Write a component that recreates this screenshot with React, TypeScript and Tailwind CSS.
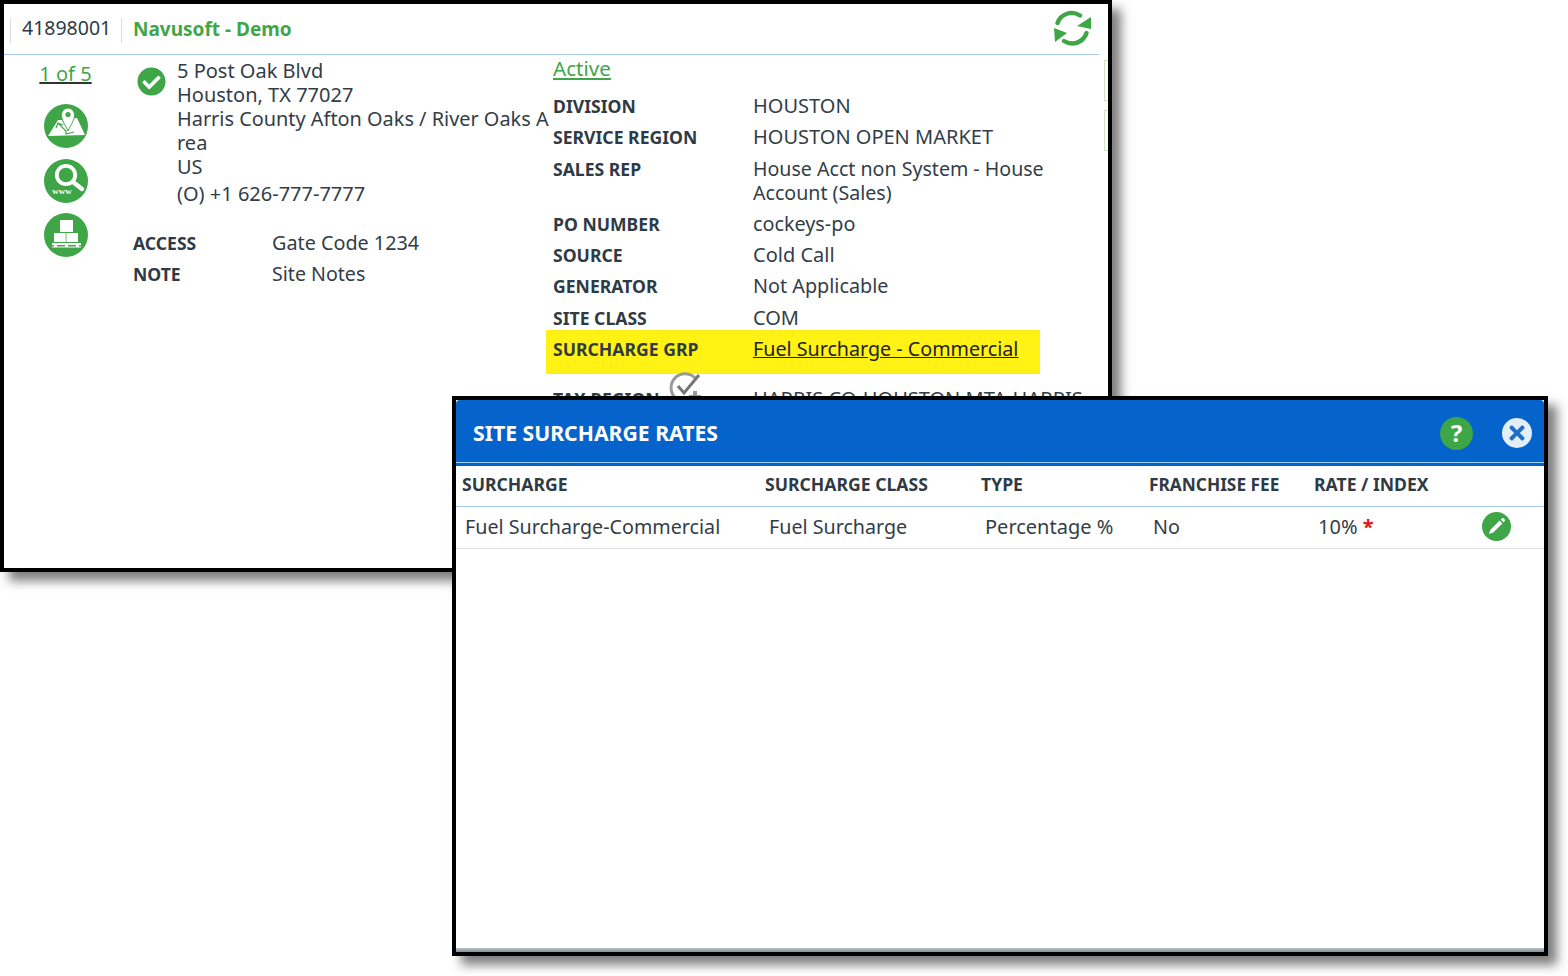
import React from "react";
import { FaCheckCircle, FaTimes } from "react-icons/fa";

const font = "font-['Noto_Sans','Open_Sans',sans-serif]";

function SyncIcon() {
  return (
    <svg viewBox="0 0 38 36" className="absolute left-[1049px] top-[6px] w-[38px] h-[36px]">
      <path d="M4.5 13 A15 15 0 0 1 27 5.5" fill="none" stroke="#3fa648" strokeWidth="4.4" strokeLinecap="round" />
      <path d="M38 7 L38 19 L24 16 Z" fill="#3fa648" />
      <path d="M33.5 23 A15 15 0 0 1 11 31" fill="none" stroke="#3fa648" strokeWidth="4.4" strokeLinecap="round" />
      <path d="M1 18 L14 23 L2 32 Z" fill="#3fa648" />
    </svg>
  );
}

function MapIcon() {
  return (
    <svg viewBox="0 0 44 44" className="w-[44px] h-[44px] block">
      <circle cx="22" cy="22" r="22" fill="#3fa648" />
      <path d="M14 16 L18 16 L24 26 L29 14 L33 14 L41 31 L4 32 Z" fill="#fff" />
      <path d="M12 24 L14 19 L22 27 L22 30 L30 28 M14 19 L19 21" stroke="#3fa648" strokeWidth="1.2" fill="none" />
      <path d="M24 27 C21 20 17.5 17 17.5 10.5 A6.5 6.5 0 0 1 30.5 10.5 C30.5 17 27 20 24 27 Z" fill="#fff" stroke="#3fa648" strokeWidth="1" />
      <circle cx="24" cy="10.5" r="2.6" fill="#3fa648" />
    </svg>
  );
}

function WebIcon() {
  return (
    <svg viewBox="0 0 44 44" className="w-[44px] h-[44px] block">
      <circle cx="22" cy="22" r="22" fill="#3fa648" />
      <circle cx="22" cy="16" r="9.2" fill="none" stroke="#fff" strokeWidth="3.8" />
      <path d="M29 23 L38 30" stroke="#fff" strokeWidth="4.4" strokeLinecap="round" />
      <text x="18" y="34.5" textAnchor="middle" fontSize="9" fontWeight="700" fill="#fff" fontFamily="Liberation Serif, serif">www</text>
    </svg>
  );
}

function PalletIcon() {
  return (
    <svg viewBox="0 0 44 44" className="w-[44px] h-[44px] block">
      <circle cx="22" cy="22" r="22" fill="#3fa648" />
      <path d="M16 7 H29 V19 H16 Z M10 20 H21.7 V29 H10 Z M22.4 20 H34 V29 H22.4 Z" fill="#fff" />
      <path d="M8 30 H37 V32 H8 Z M8 33.5 H37 V34.5 H8 Z M10 32 H13 V33.5 H10 Z M21 32 H24 V33.5 H21 Z M32 32 H35 V33.5 H32 Z" fill="#fff" />
    </svg>
  );
}

function CheckPlus() {
  return (
    <svg viewBox="0 0 36 36" className="w-[36px] h-[36px] block">
      <path d="M27 9 A14 14 0 1 0 28 25" fill="none" stroke="#9a9a9a" strokeWidth="3" />
      <path d="M9 16 L15 23 L30 5" fill="none" stroke="#777" strokeWidth="3" />
      <path d="M26 21 V33 M20 27 H32" stroke="#9a9a9a" strokeWidth="4" />
    </svg>
  );
}

function Pencil() {
  return (
    <svg viewBox="0 0 29 29" className="w-[29px] h-[29px] block">
      <circle cx="14.5" cy="14.5" r="14.5" fill="#3fa648" />
      <path d="M17.6 8.6 L20.4 11.4 L11.2 20.6 L7 22 L8.4 17.8 Z" fill="#fff" />
      <path d="M18.8 7.4 L19.8 6.4 A1.4 1.4 0 0 1 21.8 6.4 L22.6 7.2 A1.4 1.4 0 0 1 22.6 9.2 L21.6 10.2 Z" fill="#fff" />
    </svg>
  );
}

function Row({ label, children, className = "" }: { label: string; children: React.ReactNode; className?: string }) {
  return (
    <div className={`flex leading-[24px] ${className}`}>
      <div className="w-[200px] shrink-0 font-bold text-[17.6px] text-[#2f3a44]">{label}</div>
      <div className="flex-1">{children}</div>
    </div>
  );
}

function Panel() {
  return (
    <div className="w-[1112px] h-[572px] border-[4px] border-black bg-white shadow-[9px_9px_10px_rgba(0,0,0,0.5)] overflow-hidden relative">
      <div className="w-[1095px] h-[51px] border-b border-[#a9cbe8] flex items-center pl-[6px] pt-[3px] relative">
        <div className="h-[25px] flex items-center border-l border-[#ddd] pl-[11px] pr-[11px] pb-[6px] border-r text-[19.5px] text-[#2f3a44] w-[112px] whitespace-nowrap">41898001</div>
        <div className="pl-[11px] pb-[2px] font-bold text-[19px] text-[#3fa648] whitespace-nowrap">Navusoft - Demo</div>
        <SyncIcon />
      </div>

      <div className="absolute left-[1100px] top-[56px] w-[6px] h-[41px] border border-[#cfe3c4] bg-white" />
      <div className="absolute left-[1100px] top-[106px] w-[6px] h-[41px] border border-[#cfe3c4] bg-white" />

      <div className="flex text-[20px] text-[#333d47]">
        <div className="w-[124px] shrink-0 flex flex-col items-center pr-[1px]">
          <a className="mt-[5px] text-[#3fa648] underline decoration-[#333] leading-[27px]">1 of 5</a>
          <div className="mt-[17px] flex flex-col gap-[11px]">
            <MapIcon />
            <WebIcon />
            <div className="-mt-[1px]"><PalletIcon /></div>
          </div>
        </div>

        <div className="w-[425px] shrink-0 pt-[4px] pl-[5px]">
          <div className="flex pl-[4px]">
            <FaCheckCircle className="w-[29px] h-[29px] mt-[8px] text-[#3fa648] shrink-0" />
            <div className="pl-[11px] w-[381px] leading-[24px] break-all">
              <div>5 Post Oak Blvd</div>
              <div>Houston, TX 77027</div>
              <div className="whitespace-nowrap text-[19.9px]">Harris County Afton Oaks / River Oaks A</div>
              <div>rea</div>
              <div>US</div>
              <div className="mt-[3px]">(O) +1 626-777-7777</div>
            </div>
          </div>
          <div className="mt-[25px] flex leading-[24px]">
            <div className="w-[139px] font-bold text-[17.6px] text-[#2f3a44]">ACCESS</div>
            <div className="text-[19.8px]">Gate Code 1234</div>
          </div>
          <div className="mt-[7px] flex leading-[24px]">
            <div className="w-[139px] font-bold text-[17.6px] text-[#2f3a44]">NOTE</div>
            <div className="text-[19.6px]">Site Notes</div>
          </div>
        </div>

        <div className="w-[535px] shrink-0">
          <a className="block text-[#3fa648] text-[20.6px] underline leading-[27px]">Active</a>
          <div className="mt-[12px]"><Row label="DIVISION">HOUSTON</Row></div>
          <div className="mt-[7px]"><Row label="SERVICE REGION">HOUSTON OPEN MARKET</Row></div>
          <div className="mt-[8px]"><Row label="SALES REP"><div className="w-[310px] text-[19.6px]">House Acct non System - House Account (Sales)</div></Row></div>
          <div className="mt-[7px]"><Row label="PO NUMBER"><span className="text-[19.8px]">cockeys-po</span></Row></div>
          <div className="mt-[7px]"><Row label="SOURCE">Cold Call</Row></div>
          <div className="mt-[7px]"><Row label="GENERATOR"><span className="text-[19.8px]">Not Applicable</span></Row></div>
          <div className="mt-[8px]"><Row label="SITE CLASS">COM</Row></div>
          <div className="-ml-[7px] pl-[7px] w-[494px] h-[44px] pt-[7px] bg-[#fff214]">
            <Row label="SURCHARGE GRP"><span className="underline text-[#222] text-[19.7px]">Fuel Surcharge - Commercial</span></Row>
          </div>
          <div className="mt-[13px]"><Row label="TAX REGION">HARRIS CO-HOUSTON MTA-HARRIS</Row></div>
        </div>
      </div>

      <div className="absolute left-[665px] top-[366px]"><CheckPlus /></div>
    </div>
  );
}

const cols = "grid grid-cols-[303px_216px_168px_165px_1fr]";

function Modal() {
  return (
    <div className="absolute left-[452px] top-[396px] w-[1096px] h-[560px] border-[4px] border-black bg-white shadow-[9px_9px_10px_rgba(0,0,0,0.5)] flex flex-col">
      <div className="h-[62px] bg-[#0563cc] rounded-t-[4px] flex items-center pl-[17px] shrink-0">
        <div className="font-bold text-[21.2px] text-white flex-1 pt-[4px]">SITE SURCHARGE RATES</div>
        <div className="w-[33px] h-[33px] mt-[4px] rounded-full bg-[#3fa648] flex items-center justify-center text-white font-bold text-[24px] leading-none">?</div>
        <div className="w-[30px] h-[30px] mt-[4px] rounded-full bg-[#e3eef9] ml-[29px] mr-[12px] flex items-center justify-center">
          <FaTimes className="w-[22px] h-[22px] text-[#1f6fc9]" />
        </div>
      </div>
      <div className="h-[1px] bg-[#9fd0f5] shrink-0" />
      <div className="h-[3px] bg-[#0563cc] shrink-0" />
      <div className={`${cols} h-[41px] items-center border-b border-[#a9cbe8] pb-[4px] font-bold text-[17.6px] leading-[24px] text-[#2f3a44] shrink-0`}>
        <div className="pl-[6px]">SURCHARGE</div>
        <div className="pl-[6px]">SURCHARGE CLASS</div>
        <div className="pl-[6px]">TYPE</div>
        <div className="pl-[6px] pt-[2px] text-[17.3px] leading-[24px]">FRANCHISE FEE</div>
        <div className="pl-[6px]">RATE / INDEX</div>
      </div>
      <div className={`${cols} h-[42px] items-center border-b border-[#ddd] pb-[2px] text-[19.7px] text-[#333d47] shrink-0`}>
        <div className="pl-[9px]">Fuel Surcharge-Commercial</div>
        <div className="pl-[10px]">Fuel Surcharge</div>
        <div className="pl-[10px] text-[20px]">Percentage %</div>
        <div className="pl-[10px]">No</div>
        <div className="pl-[10px] flex items-center justify-between pr-[33px]">
          <span className="text-[20px]">10% <span className="text-[#e8141c] font-bold">*</span></span>
          <Pencil />
        </div>
      </div>
      <div className="flex-1" />
      <div className="h-[4px] bg-gradient-to-b from-[#b4c4d2] to-[#8f8f8f] shrink-0" />
    </div>
  );
}

export default function App() {
  return (
    <div className={`relative w-[1568px] h-[976px] bg-white overflow-hidden ${font}`}>
      <Panel />
      <Modal />
    </div>
  );
}
